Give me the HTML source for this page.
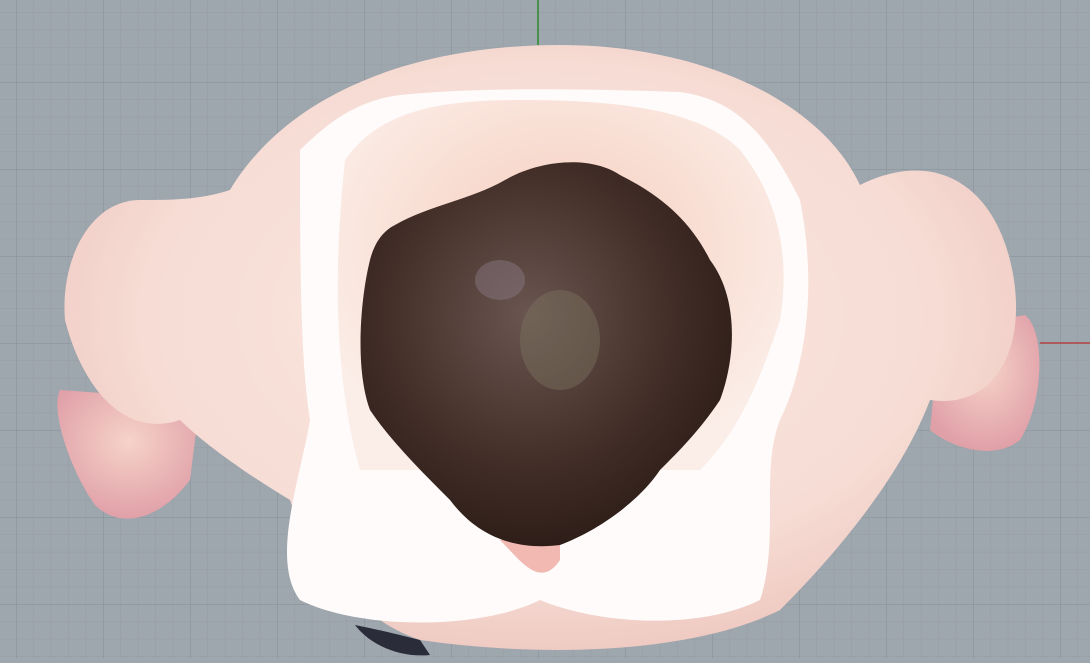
<!DOCTYPE html>
<html><head><style>html,body{margin:0;padding:0;background:#9ea6ae;overflow:hidden}</style></head><body>
<svg width="1090" height="658" viewBox="0 0 1090 658" xmlns="http://www.w3.org/2000/svg">
<defs>
<pattern id="minor" x="538" y="343" width="17.4" height="17.4" patternUnits="userSpaceOnUse">
<path d="M0 0V17.4M0 0H17.4" stroke="#959ca4" stroke-width="1" fill="none"/></pattern>
<pattern id="major" x="538" y="343" width="87" height="87" patternUnits="userSpaceOnUse">
<path d="M0 0V87M0 0H87" stroke="#868d95" stroke-width="1" fill="none"/></pattern>
<radialGradient id="skin" cx="50%" cy="45%" r="60%"><stop offset="0" stop-color="#fbeae2"/><stop offset="0.7" stop-color="#f6dcd4"/><stop offset="1" stop-color="#ecc4bc"/></radialGradient>
<radialGradient id="ear" cx="50%" cy="40%" r="60%"><stop offset="0" stop-color="#f6d3c9"/><stop offset="1" stop-color="#e0a0a8"/></radialGradient>
<radialGradient id="inner" cx="50%" cy="40%" r="60%"><stop offset="0" stop-color="#f6cdbd"/><stop offset="1" stop-color="#fbeee8"/></radialGradient>
<radialGradient id="dark" cx="45%" cy="40%" r="60%"><stop offset="0" stop-color="#6a5650"/><stop offset="0.6" stop-color="#45302a"/><stop offset="1" stop-color="#2e1d18"/></radialGradient>
</defs>
<rect width="1090" height="658" fill="#9ea6ae"/>
<rect width="1090" height="658" fill="url(#minor)"/>
<rect width="1090" height="658" fill="url(#major)"/>
<line x1="538" y1="0" x2="538" y2="45" stroke="#2a8a2a" stroke-width="1.5"/>
<line x1="1040" y1="343" x2="1090" y2="343" stroke="#b04040" stroke-width="1.5"/>
<path d="M60 390 C50 410 70 470 95 505 C120 530 160 520 190 480 L200 400 Z" fill="url(#ear)"/>
<path d="M1025 315 C1045 330 1045 400 1020 440 C995 460 955 450 930 430 L940 330 Z" fill="url(#ear)"/>
<path d="M230 190 C290 90 420 45 560 45 C700 45 820 100 860 185 C930 150 990 180 1010 260 C1030 340 1000 410 930 400 C900 480 830 560 780 610 C700 650 560 660 420 640 C360 620 310 560 290 500 C240 470 200 440 180 420 C120 440 80 380 65 320 C60 260 90 200 140 200 C170 200 200 200 230 190 Z" fill="url(#skin)"/>
<path d="M300 150 C330 120 360 100 400 95 C470 88 560 88 680 92 C740 100 770 140 800 200 C820 300 800 380 780 420 C760 470 780 540 760 600 C700 630 600 625 540 600 C480 630 360 630 300 600 C270 560 300 480 310 420 C300 360 300 250 300 150 Z" fill="#fefbfa"/>
<path d="M345 160 C380 110 440 100 520 100 C620 100 700 110 740 150 C780 200 790 260 780 320 C760 380 740 430 700 470 L360 470 C340 400 330 300 345 160 Z" fill="url(#inner)"/>
<path d="M500 540 C520 560 540 590 560 560 L560 520 Z" fill="#f1b9b2"/>
<path d="M395 225 C430 205 470 200 505 180 C540 160 590 155 620 175 C660 195 690 220 710 260 C740 300 735 360 720 400 C700 430 680 450 660 470 C640 500 600 530 560 545 C520 550 480 540 450 500 C420 470 390 440 370 410 C355 370 360 300 370 260 C375 240 385 230 395 225 Z" fill="url(#dark)"/>
<ellipse cx="560" cy="340" rx="40" ry="50" fill="#7a7460" opacity="0.45"/>
<ellipse cx="500" cy="280" rx="25" ry="20" fill="#8a7a88" opacity="0.45"/>
<path d="M355 625 C370 645 400 658 430 655 L420 640 C400 635 380 630 355 625 Z" fill="#2a2c3a"/>
</svg>
</body></html>
